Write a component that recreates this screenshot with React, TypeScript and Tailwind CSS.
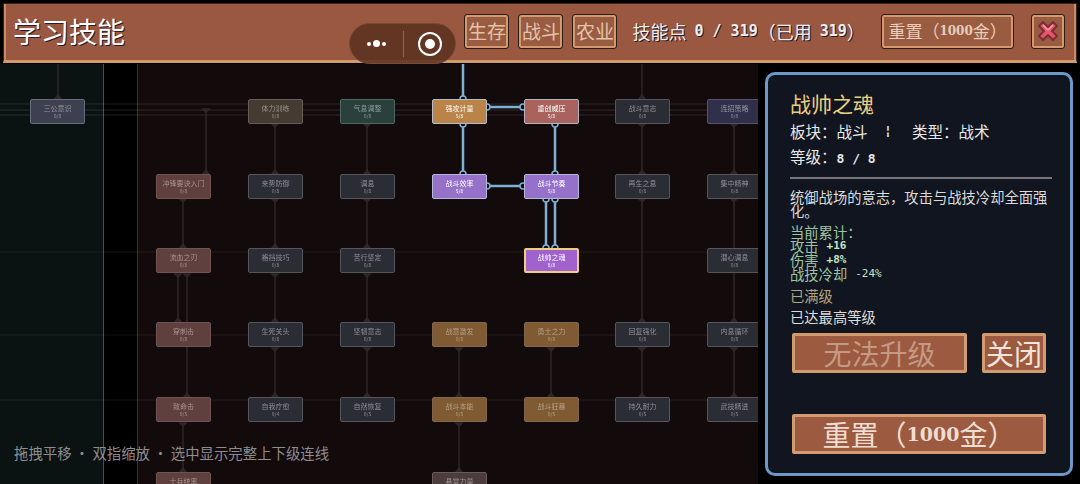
const cjk = { fontFamily: '"Noto Sans CJK SC", sans-serif' };

const colX = [30, 156, 248, 340, 432, 524, 615, 707];
const rowY = [35, 110, 184, 258, 333, 408];

type Skill = { c: number; r: number; name: string; lv: string; cls: string };

const gray = "bg-[#2b2d35] border-[#55565c] text-[#8f8f92]";
const rust = "bg-[#5f403e] border-[#6e5553] text-[#a89391]";
const ochre = "bg-[#7f5a33] border-[#80674c] text-[#b5a088]";

const skills: Skill[] = [
  { c: 0, r: 0, name: "三公意识", lv: "0/8", cls: "bg-[#3d4050] border-[#6a6c76] text-[#96969e]" },
  { c: 2, r: 0, name: "体力训练", lv: "0/8", cls: "bg-[#453b33] border-[#655c54] text-[#98928a]" },
  { c: 3, r: 0, name: "气息调整", lv: "0/8", cls: "bg-[#2a403b] border-[#4f6660] text-[#8e9c97]" },
  { c: 4, r: 0, name: "强攻计量", lv: "5/8", cls: "bg-[#ba8449] border-[#b5bec6] text-white" },
  { c: 5, r: 0, name: "重创威压", lv: "5/8", cls: "bg-[#aa625c] border-[#b3b5c4] text-white" },
  { c: 6, r: 0, name: "战斗意志", lv: "0/8", cls: gray },
  { c: 7, r: 0, name: "连招策略", lv: "0/8", cls: "bg-[#30304a] border-[#55556a] text-[#9393a3]" },
  { c: 1, r: 1, name: "冲锋要诀入门", lv: "0/8", cls: rust },
  { c: 2, r: 1, name: "来势防御", lv: "0/8", cls: gray },
  { c: 3, r: 1, name: "调息", lv: "0/8", cls: gray },
  { c: 4, r: 1, name: "战斗效率", lv: "5/8", cls: "bg-[#9671c9] border-[#b4b8d8] text-white" },
  { c: 5, r: 1, name: "战斗节奏", lv: "5/8", cls: "bg-[#9671c9] border-[#b4b8d8] text-white" },
  { c: 6, r: 1, name: "再生之息", lv: "0/8", cls: gray },
  { c: 7, r: 1, name: "集中精神", lv: "0/8", cls: gray },
  { c: 1, r: 2, name: "流血之刃", lv: "0/8", cls: rust },
  { c: 2, r: 2, name: "格挡技巧", lv: "0/8", cls: gray },
  { c: 3, r: 2, name: "苦行坚定", lv: "0/8", cls: gray },
  { c: 5, r: 2, name: "战帅之魂", lv: "8/8", cls: "bg-[#a062cc] border-[#f0cf7c] border-2 text-white" },
  { c: 7, r: 2, name: "潜心调息", lv: "0/8", cls: gray },
  { c: 1, r: 3, name: "穿刺击", lv: "0/8", cls: rust },
  { c: 2, r: 3, name: "生死关头", lv: "0/8", cls: gray },
  { c: 3, r: 3, name: "坚韧意志", lv: "0/8", cls: gray },
  { c: 4, r: 3, name: "战意激发", lv: "0/8", cls: ochre },
  { c: 5, r: 3, name: "勇士之力", lv: "0/8", cls: ochre },
  { c: 6, r: 3, name: "回复强化", lv: "0/8", cls: gray },
  { c: 7, r: 3, name: "内息循环", lv: "0/8", cls: gray },
  { c: 1, r: 4, name: "致命击", lv: "0/5", cls: rust },
  { c: 2, r: 4, name: "自我疗愈", lv: "0/4", cls: gray },
  { c: 3, r: 4, name: "自然恢复", lv: "0/5", cls: gray },
  { c: 4, r: 4, name: "战斗本能", lv: "0/5", cls: ochre },
  { c: 5, r: 4, name: "战斗狂暴", lv: "0/5", cls: ochre },
  { c: 6, r: 4, name: "持久耐力", lv: "0/5", cls: gray },
  { c: 7, r: 4, name: "武技精进", lv: "0/5", cls: gray },
  { c: 1, r: 5, name: "士兵统率", lv: "0/3", cls: rust },
  { c: 4, r: 5, name: "悬赏力量", lv: "0/3", cls: "bg-[#4b3c3d] border-[#6a5a5a] text-[#a09595]" },
];

// [x, y1, y2] in canvas coordinates
const dimV = [
  [58, 0, 35], [206, 45, 110], [275, 60, 110], [275, 135, 184], [275, 210, 258], [275, 284, 333],
  [367, 60, 110], [367, 135, 184], [367, 210, 258], [367, 284, 333],
  [178, 210, 258], [187, 210, 333], [183, 135, 184], [183, 359, 408],
  [459, 284, 333], [459, 359, 408], [551, 284, 333], [642, 0, 35], [642, 60, 110],
  [642, 135, 258], [642, 284, 333], [734, 60, 110], [734, 135, 258], [734, 284, 333],
];
const activeV = [
  [463, 0, 35], [463, 60, 110], [555, 60, 110], [546, 135, 184], [555, 135, 184],
];
const activeH = [
  [487, 523, 43], [487, 523, 122],
];

function TreeLines() {
  return (
    <svg className="absolute inset-0" width="758" height="420" fill="none">
      {[40, 46, 51].map((y) => (
        <line key={y} x1="0" x2="758" y1={y} y2={y} stroke="#ffffff" strokeOpacity="0.06" strokeWidth="2" />
      ))}
      {[188, 271, 336].map((y) => (
        <line key={y} x1="0" x2="758" y1={y} y2={y} stroke="#ffffff" strokeOpacity="0.05" strokeWidth="1.5" />
      ))}
      {dimV.map(([x, a, b], i) => (
        <g key={i} stroke="#2f2727" strokeWidth="1.5">
          <line x1={x} x2={x} y1={a} y2={b} />
          <path d={`M${x - 3} ${b}l3 -4l3 4z`} fill="#2f2727" />
          {a > 0 && <path d={`M${x - 3} ${a}l3 3l3 -3z`} fill="#2f2727" />}
        </g>
      ))}
      {activeV.map(([x, a, b], i) => (
        <g key={i} stroke="#7fb0d6" strokeWidth="2.5">
          <line x1={x} x2={x} y1={a} y2={b - 3} />
          <circle cx={x} cy={b} r="3" fill="#14090a" strokeWidth="1.5" />
          {a > 0 && <circle cx={x} cy={a} r="3" fill="#14090a" strokeWidth="1.5" />}
        </g>
      ))}
      {activeH.map(([a, b, y], i) => (
        <g key={i} stroke="#7fb0d6" strokeWidth="2.5">
          <line x1={a + 2} x2={b - 3} y1={y} y2={y} />
          <circle cx={a} cy={y} r="3" fill="#14090a" strokeWidth="1.5" />
          <circle cx={b} cy={y} r="3" fill="#14090a" strokeWidth="1.5" />
        </g>
      ))}
    </svg>
  );
}

function Node({ s }: { s: Skill }) {
  return (
    <div
      className={`absolute flex h-[25px] w-[55px] flex-col items-center justify-center rounded-[2px] border ${s.cls}`}
      style={{ left: colX[s.c], top: rowY[s.r] }}
    >
      <span className="text-[7px] leading-[8px] whitespace-nowrap blur-[0.4px]">{s.name}</span>
      <span className="text-[5px] leading-[7px] blur-[0.4px]">{s.lv}</span>
    </div>
  );
}

function HeaderBtn({ children, className = "" }: { children: React.ReactNode; className?: string }) {
  return (
    <div
      className={`flex h-[35px] items-center justify-center rounded-[3px] border border-[#2e1c14] bg-[#9a5c41] shadow-[inset_0_0_0_2px_#d3996f] ${className}`}
    >
      {children}
    </div>
  );
}

function PanelBtn({ children, className = "" }: { children: React.ReactNode; className?: string }) {
  return (
    <div
      className={`flex h-[40px] items-center justify-center rounded-[2px] border-[3px] border-[#d49a70] bg-[#9c5a40] text-[28px] leading-none ${className}`}
    >
      {children}
    </div>
  );
}

export default function App() {
  return (
    <div className="h-[484px] w-[1080px] overflow-hidden bg-black text-white" style={cjk}>
      <div className="h-[3px]" />
      <header className="mx-[3px] flex h-[60px] items-center border border-b-[3px] border-[#3a2318] border-b-[#d3996f] bg-[#99583f] pb-[2px] pl-[9px] pr-[11px] shadow-[inset_2px_0_0_#c88b63,inset_-2px_0_0_#c88b63]">
        <div className="w-[452px] text-[28px] leading-none text-white [text-shadow:1px_1px_0_#2b1a2a]">学习技能</div>
        <div className="flex gap-[9px] text-[19px] text-[#e3c3aa]">
          <HeaderBtn className="w-[45px]">生存</HeaderBtn>
          <HeaderBtn className="w-[45px]">战斗</HeaderBtn>
          <HeaderBtn className="w-[45px]">农业</HeaderBtn>
        </div>
        <div className="ml-[15px] flex w-[249px] items-center whitespace-nowrap text-[18px] text-[#eee] [text-shadow:1px_1px_0_#2b1a2a]">
          技能点
          <span className="ml-[8px] font-['DejaVu_Sans_Mono'] text-[15px] font-bold">0 / 319</span>
          （已用
          <span className="ml-[8px] font-['DejaVu_Sans_Mono'] text-[15px] font-bold">319</span>）
        </div>
        <HeaderBtn className="w-[133px] text-[17px] whitespace-nowrap text-[#e8cdb8]">
          重置（<span className="font-['DejaVu_Serif'] text-[12px] font-bold">1000</span>金）
        </HeaderBtn>
        <HeaderBtn className="ml-[17px] w-[34px]">
          <svg width="24" height="24" viewBox="0 0 24 24">
            <path
              d="M3 7L7 3L12 8L17 3L21 7L16 12L21 17L17 21L12 16L7 21L3 17L8 12Z"
              fill="#ea5468"
              stroke="#7c2c34"
              strokeWidth="2"
              strokeLinejoin="round"
            />
            <path d="M7 6L12 11L17 6" fill="none" stroke="#f5a0a8" strokeWidth="1.5" />
          </svg>
        </HeaderBtn>
      </header>

      <div className="absolute left-[349px] top-[23px] z-10 flex h-[41px] w-[107px] items-center rounded-full border border-[#7a4a38] bg-[#58301f]/85">
        <div className="flex w-[53px] items-center justify-center gap-[2px]">
          <span className="h-[4px] w-[4px] rounded-full bg-white" />
          <span className="h-[7px] w-[7px] rounded-full bg-white" />
          <span className="h-[4px] w-[4px] rounded-full bg-white" />
        </div>
        <div className="h-[26px] w-px bg-[#8a6a5a]" />
        <div className="flex flex-1 items-center justify-center">
          <div className="flex h-[24px] w-[24px] items-center justify-center rounded-full border-[2.5px] border-white">
            <span className="h-[10px] w-[10px] rounded-full bg-white" />
          </div>
        </div>
      </div>

      <div className="flex h-[421px] pt-px">
        <main className="relative h-[420px] w-[758px] flex-none overflow-hidden bg-[#130a0b]">
          <div className="absolute inset-y-0 left-0 w-[104px] border-r border-[#4a4f4e] bg-[#0a1312]" />
          <div className="absolute inset-y-0 left-[104px] w-[34px] border-r border-[#3b3232] bg-black" />
          <TreeLines />
          {skills.map((s) => (
            <Node key={s.name} s={s} />
          ))}
          <div className="absolute bottom-[24px] left-[14px] whitespace-pre text-[14.4px] leading-none text-[#8d8d90]">
            拖拽平移 · 双指缩放 · 选中显示完整上下级连线
          </div>
        </main>

        <aside className="ml-[7px] mt-[8px] h-[404px] w-[308px] rounded-[10px] border-[3px] border-[#6d98c8] bg-[#11151f] pl-[22px] pr-[20px] pt-[15px]">
          <h2 className="text-[21px] leading-[26px] text-[#e9cf7f]">战帅之魂</h2>
          <div className="mt-[3px] flex text-[15.5px] leading-[24px] text-[#e8e8e8]">
            <span className="w-[94px]">板块：战斗</span>
            <span className="w-[28px] font-['DejaVu_Sans_Mono'] text-[13px] font-bold">¦</span>
            <span>类型：战术</span>
          </div>
          <p className="mt-[1px] text-[15.5px] leading-[24px] text-[#e8e8e8]">
            等级：<span className="font-['DejaVu_Sans_Mono'] text-[13px] font-bold">8 / 8</span>
          </p>
          <div className="mt-[6px] h-[2px] w-[262px] bg-[#74767c]" />
          <p className="mt-[11px] text-[14.3px] leading-[14px] text-[#dcdcdc]">
            统御战场的意志，攻击与战技冷却全面强化。
          </p>
          <div className="mt-[7px] text-[14.3px] leading-[14px] text-[#9fc4a3]">
            <div className="h-[14px]">当前累计：</div>
            <div className="flex h-[14px] items-center">
              攻击<span className="ml-[8px] font-['DejaVu_Sans_Mono'] text-[11px] font-bold text-[#c4e4c8]">+16</span>
            </div>
            <div className="flex h-[14px] items-center">
              伤害<span className="ml-[8px] font-['DejaVu_Sans_Mono'] text-[11px] font-bold text-[#c4e4c8]">+8%</span>
            </div>
            <div className="flex h-[14px] items-center">
              战技冷却<span className="ml-[8px] font-['DejaVu_Sans_Mono'] text-[11px] text-[#c4e4c8]">-24%</span>
            </div>
          </div>
          <p className="mt-[6px] text-[14.3px] leading-[18px] text-[#b6a67e]">已满级</p>
          <p className="mt-[3px] text-[14.3px] leading-[18px] text-[#dcdcdc]">已达最高等级</p>
          <div className="mt-[7px] flex gap-[15px] pl-[2px]">
            <PanelBtn className="w-[175px] text-[#c49a85]">无法升级</PanelBtn>
            <PanelBtn className="w-[64px] text-[#f2e4dc]">关闭</PanelBtn>
          </div>
          <PanelBtn className="ml-[2px] mt-[41px] w-[254px] whitespace-nowrap text-[#f0ddd2]">
            重置（<span className="font-['DejaVu_Serif'] text-[19px] font-bold">1000</span>金）
          </PanelBtn>
        </aside>
      </div>
    </div>
  );
}
